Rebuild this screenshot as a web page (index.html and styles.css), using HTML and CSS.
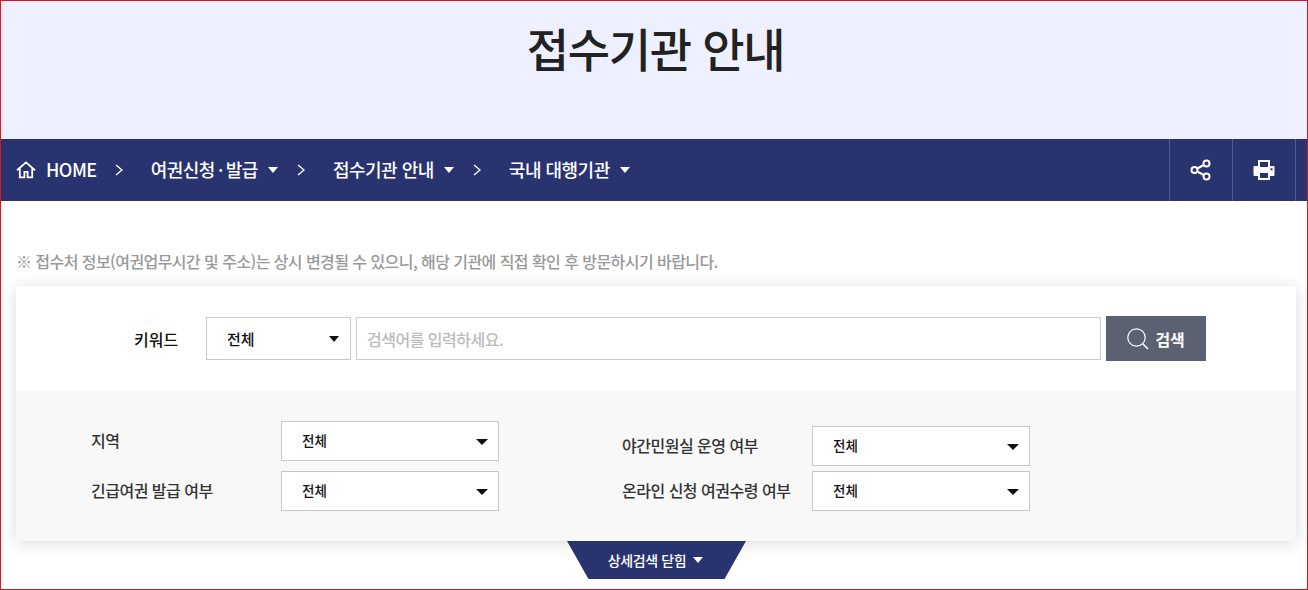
FILE: index.html
```html
<!DOCTYPE html>
<html lang="ko">
<head>
<meta charset="utf-8">
<title>접수기관 안내</title>
<link rel="stylesheet" href="styles.css">
</head>
<body>
<div class="frame">
  <header class="hero"><h1 class="hero-title">접수기관 안내</h1></header>
  <nav class="crumbs">
    <div class="crumb-list">
      <svg class="home-icon" width="20" height="20" viewBox="0 0 20 20" fill="none" stroke="#fff" stroke-width="1.8"><path d="M1 10.2 10 2.4l9 7.8M3.8 8v9.4h4.6v-5.6h3.2v5.6h4.6V8"/></svg>
      <span class="crumb crumb-home">HOME</span>
      <svg class="chev" width="8" height="12" viewBox="0 0 8 12" fill="none" stroke="#fff" stroke-width="1.4"><path d="M1 1l6 5-6 5"/></svg>
      <span class="crumb crumb-a">여권신청<span class="dot">·</span>발급</span><i class="caret"></i>
      <svg class="chev" width="8" height="12" viewBox="0 0 8 12" fill="none" stroke="#fff" stroke-width="1.4"><path d="M1 1l6 5-6 5"/></svg>
      <span class="crumb crumb-b">접수기관 안내</span><i class="caret"></i>
      <svg class="chev" width="8" height="12" viewBox="0 0 8 12" fill="none" stroke="#fff" stroke-width="1.4"><path d="M1 1l6 5-6 5"/></svg>
      <span class="crumb crumb-c">국내 대행기관</span><i class="caret"></i>
    </div>
    <div class="tools">
      <div class="tool"><svg width="22" height="22" viewBox="0 0 22 22" fill="none" stroke="#fff" stroke-width="2"><circle cx="4.5" cy="11" r="3"/><circle cx="16.5" cy="4.5" r="3"/><circle cx="16.5" cy="17.5" r="3"/><path d="M7.2 9.5 13.8 6M7.2 12.5l6.6 3.5"/></svg></div>
      <div class="tool"><svg width="22" height="22" viewBox="0 0 22 22"><path fill="#fff" fill-rule="evenodd" d="M5 1h12v6h3.5a1 1 0 0 1 1 1v8a1 1 0 0 1-1 1H17v4H5v-4H1.5a1 1 0 0 1-1-1V8a1 1 0 0 1 1-1H5zM7 3v5h8V3zM7 14v5h8v-5zM17.5 9.2v2h2v-2z"/></svg></div>
    </div>
  </nav>
  <main class="content">
    <p class="notice">※ 접수처 정보(여권업무시간 및 주소)는 상시 변경될 수 있으니, 해당 기관에 직접 확인 후 방문하시기 바랍니다.</p>
    <section class="card">
      <div class="keyword-row">
        <span class="keyword-label">키워드</span>
        <div class="select select-keyword"><span>전체</span><i class="arrow"></i></div>
        <input class="keyword-input" type="text" placeholder="검색어를 입력하세요.">
        <button class="search-btn" type="button">
          <svg width="24" height="24" viewBox="0 0 24 24" fill="none" stroke="#fff" stroke-width="1.2"><circle cx="10.5" cy="10.5" r="8.7"/><path d="M16.8 16.8 22 22" stroke-width="1.6"/></svg>
          <span>검색</span>
        </button>
      </div>
      <div class="filters">
        <div class="filter-col filter-left">
          <div class="filter-row"><span class="filter-label">지역</span><div class="select select-filter"><span>전체</span><i class="arrow arrow-filter"></i></div></div>
          <div class="filter-row"><span class="filter-label">긴급여권 발급 여부</span><div class="select select-filter"><span>전체</span><i class="arrow arrow-filter"></i></div></div>
        </div>
        <div class="filter-col filter-right">
          <div class="filter-row"><span class="filter-label">야간민원실 운영 여부</span><div class="select select-filter"><span>전체</span><i class="arrow arrow-filter"></i></div></div>
          <div class="filter-row"><span class="filter-label">온라인 신청 여권수령 여부</span><div class="select select-filter"><span>전체</span><i class="arrow arrow-filter"></i></div></div>
        </div>
      </div>
    </section>
    <button class="toggle" type="button"><span>상세검색 닫힘</span><i class="caret caret-small"></i></button>
  </main>
</div>
</body>
</html>
```
FILE: styles.css
```css
* { box-sizing: border-box; }
html, body { margin: 0; padding: 0; background: #fff; }
body { font-family: "Noto Sans CJK KR", "Noto Sans", sans-serif; color: #222; }
.frame {
  width: 1308px; height: 590px; overflow: hidden;
  border: 1px solid #b5212f; border-left-color: #e0141f; border-top-color: #d9141f;
}
.hero { height: 138px; background: #eef0ff; text-align: center; }
.hero-title { margin: 0; padding: 14px 0 0 3px; font-size: 46px; line-height: 64px; font-weight: 500; color: #222; letter-spacing: -1.3px; }
.crumbs { height: 62px; background: #283370; display: flex; justify-content: space-between; color: #fff; }
.crumb-list { display: flex; align-items: center; padding-left: 15px; }
.home-icon { margin-right: 10px; }
.crumb { font-size: 18px; font-weight: 500; line-height: 24px; white-space: nowrap; letter-spacing: -0.5px; position: relative; top: -1px; }
.dot { margin: 0 3px; }
.crumb-home { margin-right: 18px; }
.crumb-a, .crumb-b, .crumb-c { margin-left: 28px; }
.caret { width: 0; height: 0; display: block; border-left: 5.5px solid transparent; border-right: 5.5px solid transparent; border-top: 6px solid #fff; margin: 0 19px 0 10px; }
.tools { display: flex; margin-right: 11px; border-left: 1px solid #515b8e; }
.tool { width: 63px; display: flex; align-items: center; justify-content: center; border-right: 1px solid #515b8e; }
.content { padding: 0 11px 0 15px; }
.notice { margin: 0; padding-top: 48px; height: 85px; font-size: 16px; line-height: 24px; font-weight: 500; color: #999; letter-spacing: -0.56px; white-space: nowrap; }
.card { width: 1280px; height: 255px; box-shadow: 0 2px 16px rgba(0,0,0,.14); background: #f8f8f8; position: relative; }
.keyword-row { height: 105px; background: #fff; display: flex; align-items: center; padding-left: 118px; }
.keyword-label { width: 72px; font-size: 16px; font-weight: 500; color: #111; }
.select { display: flex; align-items: center; justify-content: space-between; background: #fff; border: 1px solid #c8c8c8; color: #111; font-weight: 500; }
.select-keyword { width: 145px; height: 43px; padding: 0 11px 0 20px; font-size: 15px; }
.arrow { width: 0; height: 0; border-left: 5.5px solid transparent; border-right: 5.5px solid transparent; border-top: 6px solid #111; }
.arrow-filter { border-left-width: 6px; border-right-width: 6px; margin-top: 3px; }
.keyword-input { width: 745px; height: 43px; margin-left: 5px; padding: 0 10px; border: 1px solid #c8cccc; font: 500 16px "Noto Sans CJK KR", sans-serif; letter-spacing: -0.5px; outline: 0; }
.keyword-input::placeholder { color: #bbb; opacity: 1; }
.search-btn { width: 100px; height: 45px; margin-left: 5px; padding: 0 2px 0 0; border: 0; background: #5c6172; color: #fff; display: flex; align-items: center; justify-content: center; gap: 6px; font: 700 16px "Noto Sans CJK KR", sans-serif; letter-spacing: -0.3px; }
.filters { display: flex; height: 150px; padding-left: 75px; }
.filter-col { display: flex; flex-direction: column; }
.filter-left { width: 531px; padding-top: 30px; gap: 10px; }
.filter-right { padding-top: 35px; gap: 5px; }
.filter-row { display: flex; align-items: center; height: 40px; }
.filter-label { width: 190px; font-size: 16px; font-weight: 500; color: #333; white-space: nowrap; letter-spacing: -0.5px; position: relative; top: -1px; }
.select-filter { width: 218px; height: 40px; padding: 0 10px 2px 20px; font-size: 13.5px; }
.toggle { display: flex; align-items: center; justify-content: center; width: 179px; height: 38px; margin: 0 0 0 551px; padding: 0 2px 0 0; border: 0; background: #283370; color: #fff; clip-path: polygon(0 0, 100% 0, 88% 100%, 12% 100%); font: 500 14px "Noto Sans CJK KR", sans-serif; letter-spacing: -0.4px; }
.caret-small { margin: 0 0 0 7px; }
```
